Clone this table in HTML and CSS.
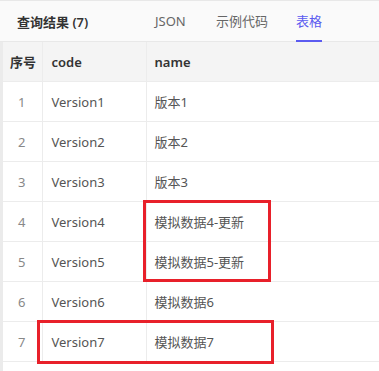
FILE: index.html
```html
<!DOCTYPE html>
<html lang="zh">
<head>
  <meta charset="UTF-8">
  <title>查询结果</title>
  <link rel="stylesheet" href="styles.css">
</head>
<body>
  <div class="panel">
    <div class="tabs">
      <div class="tab-title">查询结果 (7)</div>
      <div class="tab tab-json">JSON</div>
      <div class="tab tab-code">示例代码</div>
      <div class="tab active">表格</div>
    </div>

    <div class="result">
      <table class="grid">
        <colgroup>
          <col class="c-no">
          <col class="c-code">
          <col>
        </colgroup>
        <thead>
          <tr>
            <th class="col-no">序号</th>
            <th class="col-code">code</th>
            <th>name</th>
          </tr>
        </thead>
        <tbody>
          <tr><td class="col-no">1</td><td class="col-code">Version1</td><td>版本1</td></tr>
          <tr><td class="col-no">2</td><td class="col-code">Version2</td><td>版本2</td></tr>
          <tr><td class="col-no">3</td><td class="col-code">Version3</td><td>版本3</td></tr>
          <tr><td class="col-no">4</td><td class="col-code">Version4</td><td>模拟数据4-更新</td></tr>
          <tr><td class="col-no">5</td><td class="col-code">Version5</td><td>模拟数据5-更新</td></tr>
          <tr><td class="col-no">6</td><td class="col-code">Version6</td><td>模拟数据6</td></tr>
          <tr><td class="col-no">7</td><td class="col-code">Version7</td><td>模拟数据7</td></tr>
        </tbody>
      </table>

      <!-- annotation boxes drawn over the table -->
      <div class="mark mark-updated"></div>
      <div class="mark mark-new"></div>
    </div>
  </div>
</body>
</html>
```

FILE: styles.css
```css
body {
  margin: 0;
  font-family: "Noto Sans", "Noto Sans CJK SC", sans-serif;
  font-size: 13px;
  background-color: #ffffff;
  overflow: hidden;
}

.panel {
  width: 379px;
  height: 371px;
  border-top: 1px solid #e8e8e8;
  box-sizing: border-box;
  overflow: hidden;
}

.tabs {
  display: flex;
  align-items: center;
  height: 40px;
  background-color: #fafafa;
  border-bottom: 1px solid #e8e8e8;
}

.tab-title {
  margin-left: 17px;
  width: 138px;
  font-weight: 600;
  color: #333333;
}

.tab {
  color: #666666;
  height: 40px;
  line-height: 40px;
  box-sizing: border-box;
}

.tab-json {
  width: 61px;
}

.tab-code {
  width: 80px;
}

.tab.active {
  color: #5b5bf0;
  border-bottom: 3px solid #5b5bf0;
  margin-bottom: -2px;
  height: 42px;
}

.result {
  position: relative;
  height: 329px;
  border-left: 3px solid #ebebeb;
}

.grid {
  width: 100%;
  border-collapse: collapse;
  table-layout: fixed;
}

.c-no {
  width: 39px;
}

.c-code {
  width: 104px;
}

.grid th,
.grid td {
  height: 39px;
  padding: 0 0 0 8px;
  border-bottom: 1px solid #ececec;
  border-right: 1px solid #ececec;
  text-align: left;
  color: #555555;
  white-space: nowrap;
}

.grid th {
  background-color: #f4f4f4;
  color: #333333;
  font-weight: 600;
}

.grid th:last-child,
.grid td:last-child {
  border-right: none;
}

.grid th.col-no {
  padding-left: 7px;
}

.grid .col-code {
  padding-left: 9px;
}

.grid td.col-no {
  text-align: center;
  padding: 0 1px 0 0;
  color: #888888;
}

.mark {
  position: absolute;
  border: 3px solid #e8202a;
  box-sizing: border-box;
}

.mark-updated {
  left: 140px;
  top: 158px;
  width: 128px;
  height: 82px;
}

.mark-new {
  left: 34px;
  top: 278px;
  width: 237px;
  height: 44px;
}
```
